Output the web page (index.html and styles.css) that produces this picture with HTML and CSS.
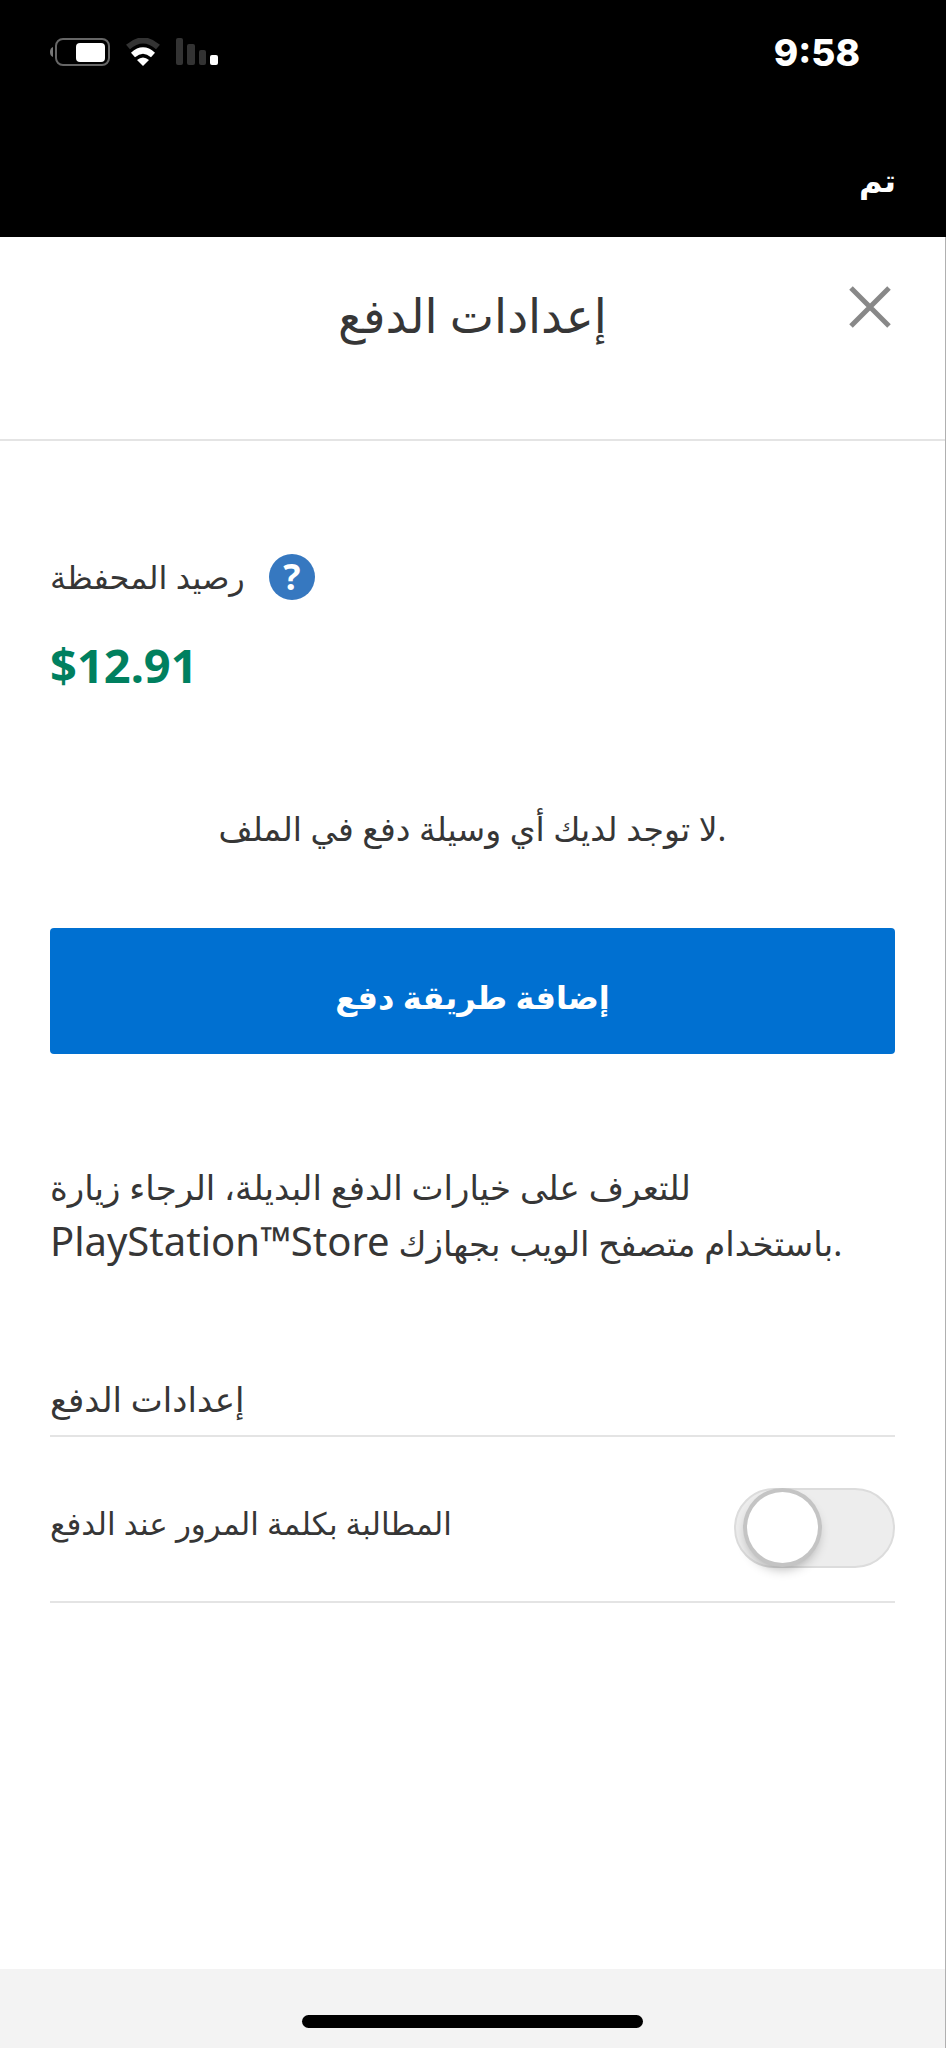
FILE: index.html
```html
<!DOCTYPE html>
<html lang="ar" dir="ltr">
<head>
    <meta charset="UTF-8">
    <meta name="viewport" content="width=device-width, initial-scale=1.0">
    <title>إعدادات الدفع</title>
    <link rel="stylesheet" href="styles.css">
</head>
<body>
    <div class="top-bar">
        <div class="status-bar">
            <div class="status-icons">
                <svg width="60" height="28" viewBox="0 0 60 28" aria-hidden="true">
                    <path d="M3 9 Q0 10 0 14 Q0 18 3 19 Z" fill="#777"/>
                    <rect x="6" y="1" width="53" height="26" rx="7" fill="none" stroke="#666" stroke-width="2"/>
                    <rect x="26" y="5" width="29" height="19" rx="4" fill="#fff"/>
                </svg>
                <svg width="36" height="28" viewBox="0 0 36 28" aria-hidden="true">
                    <path d="M3 9 Q18 -4 33 9" fill="none" stroke="#333" stroke-width="6"/>
                    <path d="M8 17 Q18 8 28 17" fill="none" stroke="#fff" stroke-width="6"/>
                    <path d="M12 22 Q18 17 24 22 L18 28 Z" fill="#fff"/>
                </svg>
                <svg width="42" height="28" viewBox="0 0 42 28" aria-hidden="true">
                    <rect x="0" y="0" width="7" height="27" rx="2" fill="#333"/>
                    <rect x="11" y="6" width="8" height="21" rx="2" fill="#333"/>
                    <rect x="23" y="12" width="7" height="15" rx="2" fill="#333"/>
                    <rect x="34" y="17" width="8" height="10" rx="2" fill="#fff"/>
                </svg>
            </div>
            <span class="clock">9:58</span>
        </div>
        <button class="done-btn">تم</button>
    </div>

    <div class="page">
        <header class="header">
            <h1>إعدادات الدفع</h1>
            <button class="close-btn" aria-label="إغلاق">
                <svg width="42" height="42" viewBox="0 0 42 42" aria-hidden="true">
                    <path d="M2 2 L40 40 M40 2 L2 40" stroke="#888" stroke-width="5"/>
                </svg>
            </button>
        </header>

        <main class="content">
            <div class="wallet-label">
                <span>رصيد المحفظة</span>
                <button class="help-btn" aria-label="مساعدة">?</button>
            </div>
            <div class="balance">$12.91</div>

            <p class="no-method">لا توجد لديك أي وسيلة دفع في الملف.</p>
            <button class="add-btn">إضافة طريقة دفع</button>

            <p class="hint">للتعرف على خيارات الدفع البديلة، الرجاء زيارة<br><span class="store-name">PlayStation™Store</span> باستخدام متصفح الويب بجهازك.</p>

            <h2>إعدادات الدفع</h2>
            <div class="setting-row">
                <label for="requirePassword">المطالبة بكلمة المرور عند الدفع</label>
                <input type="checkbox" id="requirePassword" class="toggle">
            </div>
        </main>

        <footer class="home-area">
            <div class="home-bar"></div>
        </footer>
    </div>
</body>
</html>
```
FILE: styles.css
```css
* {
    box-sizing: border-box;
}
body {
    margin: 0;
    min-height: 100vh;
    display: flex;
    flex-direction: column;
    background-color: #fff;
    color: #363636;
    font-family: "Noto Sans", "DejaVu Sans", sans-serif;
    font-size: 32px;
}
button {
    border: none;
    padding: 0;
    background: none;
    font-family: inherit;
    cursor: pointer;
}
h1, h2, p {
    margin: 0;
    font-weight: 400;
}
.top-bar {
    height: 237px;
    padding: 28px 50px 0;
    background-color: #000;
    color: #fff;
}
.status-bar {
    display: flex;
    justify-content: space-between;
    align-items: center;
    height: 48px;
    padding-right: 36px;
}
.status-icons {
    display: flex;
    gap: 15px;
}
.clock {
    font-family: Inter, sans-serif;
    font-size: 37px;
    font-weight: 800;
}
.done-btn {
    display: block;
    margin: 80px 0 0 auto;
    color: #fff;
    font-size: 32px;
    font-weight: 700;
    line-height: 48px;
}
.page {
    flex: 1;
    display: flex;
    flex-direction: column;
    border-right: 1px solid #b0b0b0;
}
.header {
    display: grid;
    grid-template-columns: 42px 1fr 42px;
    align-items: start;
    height: 204px;
    padding: 49px 54px 0;
    border-bottom: 2px solid #e4e4e4;
}
h1 {
    grid-column: 2;
    text-align: center;
    font-size: 47px;
    line-height: 58px;
}
.close-btn {
    height: 42px;
}
.close-btn svg {
    display: block;
}
.content {
    flex: 1;
    padding: 108px 50px 0;
}
.wallet-label {
    display: flex;
    align-items: center;
    gap: 24px;
    line-height: 56px;
}
.help-btn {
    width: 46px;
    height: 46px;
    border-radius: 50%;
    background-color: #3678c0;
    color: #fff;
    font-size: 36px;
    font-weight: 700;
    line-height: 46px;
}
.balance {
    margin-top: 28px;
    color: #00805f;
    font-size: 47px;
    font-weight: 700;
    line-height: 64px;
}
.no-method {
    margin-top: 104px;
    text-align: center;
    font-size: 33px;
    line-height: 56px;
}
.add-btn {
    display: block;
    width: 100%;
    height: 126px;
    margin-top: 71px;
    padding-top: 10px;
    border-radius: 4px;
    background-color: #0070d1;
    color: #fff;
    font-size: 32px;
    font-weight: 700;
}
.hint {
    margin-top: 105px;
    font-size: 34px;
    line-height: 56px;
}
.store-name {
    font-size: 40px;
    line-height: 1;
}
h2 {
    margin-top: 100px;
    padding-bottom: 8px;
    border-bottom: 2px solid #e4e4e4;
    font-size: 34px;
    line-height: 56px;
}
.setting-row {
    display: flex;
    justify-content: space-between;
    align-items: center;
    height: 166px;
    padding-top: 18px;
    border-bottom: 2px solid #e4e4e4;
}
.setting-row label {
    padding-bottom: 10px;
    font-size: 31px;
}
.toggle {
    appearance: none;
    width: 161px;
    height: 80px;
    margin: 0;
    padding: 2px 11px;
    border: 2px solid #dcdcdc;
    border-radius: 40px;
    background-color: #ededed;
    cursor: pointer;
}
.toggle::before {
    content: "";
    display: block;
    width: 71px;
    height: 71px;
    border-radius: 50%;
    background-color: #fff;
    box-shadow: 0 0 0 4px #c4c4c4, 0 6px 12px rgba(0,0,0,0.3);
}
.toggle:checked {
    padding-left: 74px;
    background-color: #0070d1;
}
.home-area {
    display: flex;
    justify-content: center;
    height: 79px;
    padding-top: 46px;
    background-color: #f3f3f3;
}
.home-bar {
    width: 36%;
    height: 13px;
    border-radius: 7px;
    background-color: #000;
}
```
